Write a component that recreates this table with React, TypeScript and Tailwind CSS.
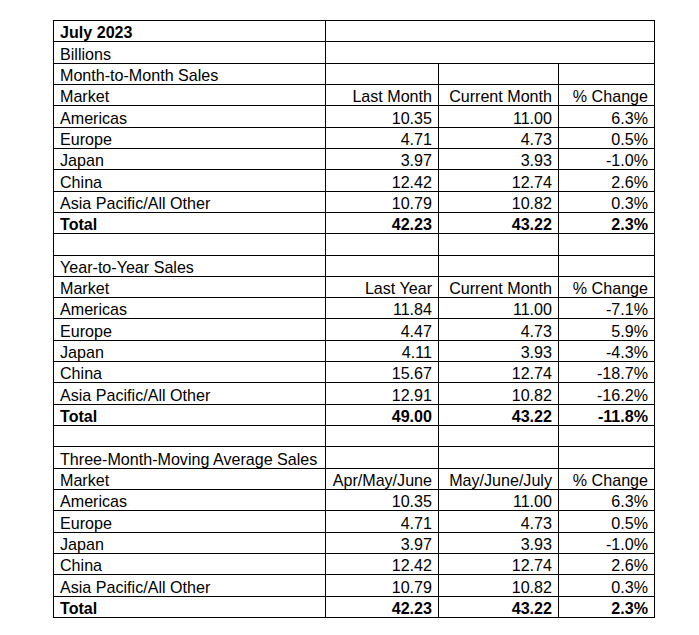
import React from "react";

type Row = { cells: string[]; bold?: boolean; span?: boolean };

const sections: { title: string; head: string[]; rows: string[][] }[] = [
  {
    title: "Month-to-Month Sales",
    head: ["Market", "Last Month", "Current Month", "% Change"],
    rows: [
      ["Americas", "10.35", "11.00", "6.3%"],
      ["Europe", "4.71", "4.73", "0.5%"],
      ["Japan", "3.97", "3.93", "-1.0%"],
      ["China", "12.42", "12.74", "2.6%"],
      ["Asia Pacific/All Other", "10.79", "10.82", "0.3%"],
      ["Total", "42.23", "43.22", "2.3%"],
    ],
  },
  {
    title: "Year-to-Year Sales",
    head: ["Market", "Last Year", "Current Month", "% Change"],
    rows: [
      ["Americas", "11.84", "11.00", "-7.1%"],
      ["Europe", "4.47", "4.73", "5.9%"],
      ["Japan", "4.11", "3.93", "-4.3%"],
      ["China", "15.67", "12.74", "-18.7%"],
      ["Asia Pacific/All Other", "12.91", "10.82", "-16.2%"],
      ["Total", "49.00", "43.22", "-11.8%"],
    ],
  },
  {
    title: "Three-Month-Moving Average Sales",
    head: ["Market", "Apr/May/June", "May/June/July", "% Change"],
    rows: [
      ["Americas", "10.35", "11.00", "6.3%"],
      ["Europe", "4.71", "4.73", "0.5%"],
      ["Japan", "3.97", "3.93", "-1.0%"],
      ["China", "12.42", "12.74", "2.6%"],
      ["Asia Pacific/All Other", "10.79", "10.82", "0.3%"],
      ["Total", "42.23", "43.22", "2.3%"],
    ],
  },
];

function buildRows(): Row[] {
  const out: Row[] = [];
  out.push({ cells: ["July 2023", ""], bold: true, span: true });
  out.push({ cells: ["Billions", ""], span: true });
  sections.forEach((s, i) => {
    if (i > 0) out.push({ cells: ["", "", "", ""] });
    out.push({ cells: [s.title, "", "", ""] });
    out.push({ cells: s.head });
    s.rows.forEach((r) => out.push({ cells: r, bold: r[0] === "Total" }));
  });
  return out;
}

export default function App() {
  const rows = buildRows();
  return (
    <div
      className="w-[699px] h-[635px] bg-white text-black pt-[20px] pl-[53px]"
      style={{ fontFamily: '"Liberation Sans", Arial, sans-serif' }}
    >
      <div className="grid grid-cols-[272px_113px_120px_96px] grid-rows-[repeat(28,minmax(0,1fr))] w-[602px] h-[598px] border-t border-l border-black text-[16.1px] leading-[17px]">
        {rows.map((r, ri) =>
          r.span ? (
            <React.Fragment key={ri}>
              <div className={`flex items-end pl-[6px] border-r border-b border-black whitespace-nowrap ${r.bold ? "font-bold" : ""}`}>
                <span>{r.cells[0]}</span>
              </div>
              <div className="col-span-3 border-r border-b border-black" />
            </React.Fragment>
          ) : (
            r.cells.map((c, ci) => (
              <div
                key={`${ri}-${ci}`}
                className={`flex items-end border-r border-b border-black whitespace-nowrap ${
                  ci === 0 ? "justify-start pl-[6px]" : "justify-end pr-[6px]"
                } ${r.bold ? "font-bold" : ""}`}
              >
                <span>{c}</span>
              </div>
            ))
          )
        )}
      </div>
    </div>
  );
}
